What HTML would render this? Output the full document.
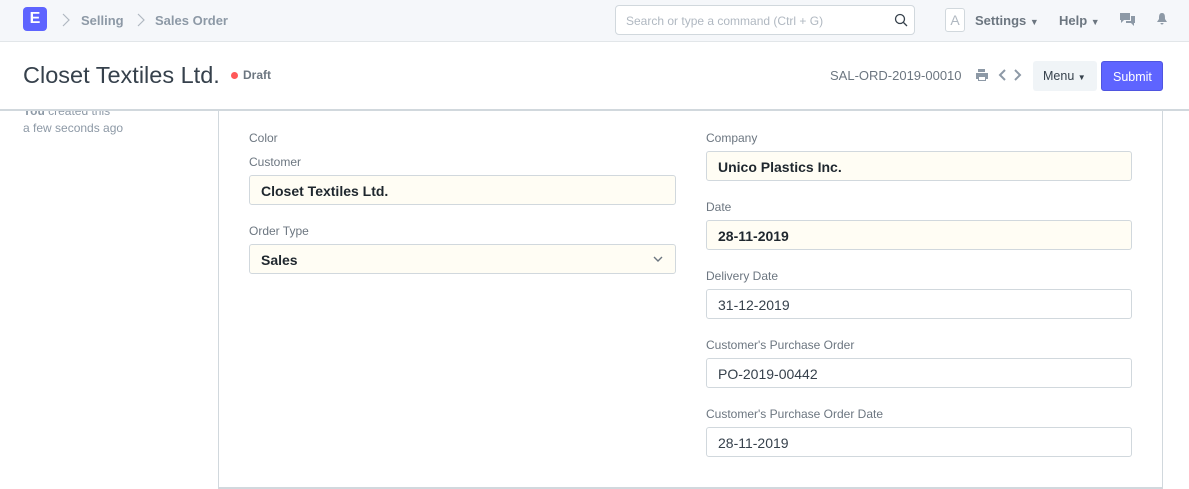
<!DOCTYPE html>
<html><head><style>
*{box-sizing:border-box;margin:0;padding:0}
body{width:1189px;height:489px;overflow:hidden;background:#fff;font-family:"Liberation Sans",sans-serif;position:relative;color:#36414c}
.nav{position:absolute;left:0;top:0;width:1189px;height:42px;background:#f5f7fa;border-bottom:1px solid #e2e6e9}
.abs{position:absolute}
.logo{left:23px;top:7px;width:24px;height:24px;background:#5e64ff;border-radius:4px;color:#fff;font-weight:bold;font-size:16px;text-align:center;line-height:24px}
.bc{top:13px;font-size:13px;font-weight:bold;color:#8d99a6}
.search{left:615px;top:5px;width:300px;height:30px;border:1px solid #d1d8dd;border-radius:4px;background:#fff;font-size:12px;color:#b0b8c1;padding:8px 10px}
.lbl{font-size:12px;color:#6c7680}
.inp{height:30px;border:1px solid #d1d8dd;border-radius:3px;font-size:14px;padding:7px 11px;color:#36414c}
.y{background:#fffdf4;font-weight:bold;color:#1f272e}
</style></head><body>
<div class="nav">
<div class="abs logo">E</div>
<svg class="abs" style="left:62px;top:13px" width="8" height="14"><path d="M1 1l6 6-6 6" fill="none" stroke="#b0b8c1" stroke-width="1.2"/></svg>
<div class="abs bc" style="left:81px">Selling</div>
<svg class="abs" style="left:137px;top:13px" width="8" height="14"><path d="M1 1l6 6-6 6" fill="none" stroke="#b0b8c1" stroke-width="1.2"/></svg>
<div class="abs bc" style="left:155px">Sales Order</div>
<div class="abs search">Search or type a command (Ctrl + G)
<svg style="position:absolute;right:6px;top:7px" width="14" height="14" viewBox="0 0 14 14"><circle cx="6" cy="6" r="4.5" fill="none" stroke="#36414c" stroke-width="1.3"/><path d="M9.5 9.5L13 13" stroke="#36414c" stroke-width="1.3"/></svg></div>
<div class="abs" style="left:945px;top:8px;width:20px;height:24px;border:1px solid #d1d8dd;border-radius:3px;background:#fff;color:#b0b8c1;font-size:14px;text-align:center;line-height:22px">A</div>
<div class="abs bc" style="left:975px;color:#6c7680">Settings <span style="font-size:9px">▼</span></div>
<div class="abs bc" style="left:1059px;color:#6c7680">Help <span style="font-size:9px">▼</span></div>
<svg class="abs" style="left:1119px;top:12px" width="17" height="14"><path d="M1 1h10v7H5l-3 3V8H1z M12 4h4v7h-1v3l-3-3H7V9h5z" fill="#8d99a6"/></svg>
<svg class="abs" style="left:1156px;top:12px" width="12" height="14"><path d="M6 1C3 1 3 4 3 7L1 10h10L9 7c0-3 0-6-3-6zM4.5 11a1.5 1.5 0 003 0z" fill="#8d99a6"/></svg>
</div>
<div class="abs" style="left:23px;top:62px;font-size:23.5px;color:#36414c">Closet Textiles Ltd.</div>
<div class="abs" style="left:231px;top:72px;width:7px;height:7px;border-radius:50%;background:#ff5858"></div>
<div class="abs" style="left:243px;top:68px;font-size:12px;font-weight:bold;color:#6c7680">Draft</div>
<div class="abs" style="left:830px;top:68px;font-size:13px;color:#6c7680">SAL-ORD-2019-00010</div>
<svg class="abs" style="left:975px;top:68px" width="48" height="14"><path d="M3 1h7v3H3z M1 5h12v6h-2v2H3v-2H1z" fill="#8d99a6"/><rect x="4" y="9" width="6" height="3" fill="#fff"/><path d="M30 2l-5 5 5 5M40 2l5 5-5 5" fill="none" stroke="#8d99a6" stroke-width="2"/></svg>
<div class="abs" style="left:1033px;top:61px;width:64px;height:30px;background:#f0f4f7;border-radius:3px;font-size:12.5px;color:#36414c;padding:8px 10px">Menu <span style="font-size:8px">▼</span></div>
<div class="abs" style="left:1101px;top:61px;width:62px;height:30px;background:#5e64ff;border:1px solid #4f55e0;border-radius:3px;font-size:12.5px;color:#fff;padding:8px 11px">Submit</div>
<div class="abs" style="left:0;top:109px;width:1189px;height:2px;background:#d1d8dd"></div>
<div class="abs" style="left:23px;top:111px;height:6px;width:150px;overflow:hidden"><div style="position:relative;top:-7px;font-size:12px;color:#8d99a6"><b>You</b> created this</div></div>
<div class="abs" style="left:23px;top:121px;font-size:12px;color:#8d99a6">a few seconds ago</div>
<div class="abs" style="left:218px;top:110px;width:945px;height:379px;border:1px solid #d1d8dd;border-top:none"></div>
<div class="abs" style="left:218px;top:487px;width:945px;height:1px;background:#d1d8dd"></div>
<div class="abs lbl" style="left:249px;top:131px">Color</div>
<div class="abs lbl" style="left:249px;top:155px">Customer</div>
<div class="abs inp y" style="left:249px;top:175px;width:427px">Closet Textiles Ltd.</div>
<div class="abs lbl" style="left:249px;top:224px">Order Type</div>
<div class="abs inp y" style="left:249px;top:244px;width:427px">Sales<svg style="position:absolute;right:12px;top:11px" width="10" height="7"><path d="M1 1l4 4 4-4" fill="none" stroke="#6c7680" stroke-width="1.4"/></svg></div>
<div class="abs lbl" style="left:706px;top:131px">Company</div>
<div class="abs inp y" style="left:706px;top:151px;width:426px">Unico Plastics Inc.</div>
<div class="abs lbl" style="left:706px;top:200px">Date</div>
<div class="abs inp y" style="left:706px;top:220px;width:426px">28-11-2019</div>
<div class="abs lbl" style="left:706px;top:269px">Delivery Date</div>
<div class="abs inp" style="left:706px;top:289px;width:426px">31-12-2019</div>
<div class="abs lbl" style="left:706px;top:338px">Customer's Purchase Order</div>
<div class="abs inp" style="left:706px;top:358px;width:426px">PO-2019-00442</div>
<div class="abs lbl" style="left:706px;top:407px">Customer's Purchase Order Date</div>
<div class="abs inp" style="left:706px;top:427px;width:426px">28-11-2019</div>
</body></html>
